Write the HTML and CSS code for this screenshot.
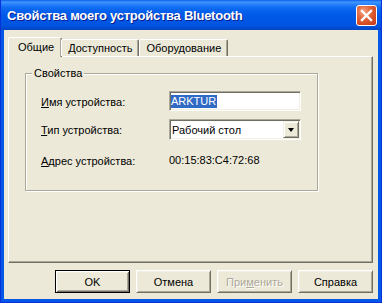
FILE: index.html
```html
<!DOCTYPE html>
<html lang="ru">
<head>
<meta charset="utf-8">
<title>Свойства моего устройства Bluetooth</title>
<link rel="stylesheet" href="styles.css">
</head>
<body>
<div class="window">
  <div class="titlebar">
    <span class="title">Свойства моего устройства Bluetooth</span>
    <button class="close" type="button" aria-label="Закрыть">
      <svg width="13" height="13" viewBox="0 0 13 13"><path d="M2 2 L11 11 M11 2 L2 11" stroke="#fff" stroke-width="2.4" stroke-linecap="square" fill="none"/></svg>
    </button>
  </div>
  <div class="client">
    <div class="tabs">
      <div class="tab active">Общие</div>
      <div class="tab">Доступность</div>
      <div class="tab">Оборудование</div>
    </div>
    <div class="panel">
      <div class="group">
        <span class="group-title">Свойства</span>
        <div class="form">
          <span class="label"><u>И</u>мя устройства:</span>
          <div class="edit"><span class="sel">ARKTUR</span></div>
          <span class="label"><u>Т</u>ип устройства:</span>
          <div class="combo">
            <span class="combo-text">Рабочий стол</span>
            <span class="combo-btn"><span class="arrow"></span></span>
          </div>
          <span class="label"><u>А</u>дрес устройства:</span>
          <span class="value">00:15:83:C4:72:68</span>
        </div>
      </div>
    </div>
    <div class="buttons">
      <button class="btn default" type="button">OK</button>
      <button class="btn" type="button">Отмена</button>
      <button class="btn disabled" type="button">При<u>м</u>енить</button>
      <button class="btn" type="button">Справка</button>
    </div>
  </div>
</div>
</body>
</html>
```

FILE: styles.css
```css
* { box-sizing: border-box; }

html, body {
  margin: 0;
  padding: 0;
  background: #ffffff;
}

body {
  font-family: "Liberation Sans", Arial, sans-serif;
  font-size: 11px;
  color: #000;
}

.window {
  width: 382px;
  height: 303px;
  display: flex;
  flex-direction: column;
  background: #0458E8;
  border-left: 1px solid #0831D9;
  border-right: 1px solid #0831D9;
  border-bottom: 1px solid #0831D9;
}

.titlebar {
  height: 30px;
  flex: 0 0 30px;
  display: flex;
  align-items: center;
  padding-left: 6px;
  padding-right: 4px;
  background: linear-gradient(to bottom,
    #0A5DE8 0px, #3F96FF 2px, #2C84FC 4px, #1270F4 7px, #0864EE 10px,
    #0059E8 15px, #0056E4 22px, #0053DD 26px, #0048C8 29px, #0046C3 30px);
}

.title {
  font-family: "Liberation Sans", Arial, sans-serif;
  font-weight: bold;
  font-size: 13px;
  color: #ffffff;
  text-shadow: 1px 1px 0 #0A1E8C;
  letter-spacing: -0.25px;
  margin-top: 1px;
}

.close {
  margin-left: auto;
  width: 21px;
  height: 21px;
  padding: 0;
  border: 1px solid #ffffff;
  border-radius: 3px;
  background: radial-gradient(circle at 35% 30%, #F4A88C 0%, #E4693F 35%, #D44A22 70%, #C23A17 100%);
  display: flex;
  align-items: center;
  justify-content: center;
  margin-top: 1px;
}

.close svg { display: block; }

.client {
  flex: 1;
  margin: 0 3px 3px 3px;
  background: #ECE9D8;
  padding: 7px 5px 0 4px;
  display: flex;
  flex-direction: column;
}

.tabs {
  display: flex;
  align-items: flex-end;
  height: 20px;
  margin-bottom: -1px;
  position: relative;
  z-index: 1;
}

.tab {
  height: 17px;
  margin-bottom: 1px;
  padding: 1px 6px 0 6px;
  line-height: 14px;
  background: #ECE9D8;
  border-top: 1px solid #ffffff;
  border-left: 1px solid #ffffff;
  border-right: 1px solid #716F64;
  box-shadow: inset -1px 0 0 #ACA899;
  border-radius: 2px 2px 0 0;
  white-space: nowrap;
}

.tab.active {
  height: 20px;
  margin-bottom: 0;
  padding: 2px 7px 0 9px;
  margin-right: -1px;
}

.panel {
  width: 365px;
  height: 207px;
  border-top: 1px solid #ffffff;
  border-left: 1px solid #ffffff;
  border-right: 1px solid #716F64;
  border-bottom: 1px solid #716F64;
  box-shadow: inset -1px -1px 0 #ACA899;
  padding: 16px 0 0 16px;
}

.group {
  position: relative;
  width: 293px;
  height: 118px;
  border: 1px solid #ACA899;
  box-shadow: inset 1px 1px 0 #ffffff, 1px 1px 0 #ffffff;
  padding: 17px 0 0 15px;
}

.group-title {
  position: absolute;
  top: -8px;
  left: 6px;
  padding: 0 2px;
  background: #ECE9D8;
  line-height: 14px;
}

.form {
  display: grid;
  grid-template-columns: 128px 132px;
  grid-template-rows: 20px 21px 24px;
  row-gap: 8px;
  align-items: center;
}

.label { line-height: 13px; padding-top: 2px; }

.value { line-height: 13px; padding-top: 1px; }

.edit {
  height: 20px;
  background: #ffffff;
  border: 1px solid;
  border-color: #ACA899 #ffffff #ffffff #ACA899;
  box-shadow: inset 1px 1px 0 #716F64, inset -1px -1px 0 #F1EFE2;
  display: flex;
  align-items: center;
  padding-left: 1px;
}

.sel {
  background: #316AC5;
  color: #ffffff;
  line-height: 13px;
  padding: 0 1px 0 0;
}

.combo {
  height: 21px;
  background: #ffffff;
  border: 1px solid;
  border-color: #ACA899 #ffffff #ffffff #ACA899;
  box-shadow: inset 1px 1px 0 #716F64, inset -1px -1px 0 #F1EFE2;
  display: flex;
  align-items: center;
  padding: 1px 1px 1px 2px;
}

.combo-text { flex: 1; line-height: 13px; padding-top: 1px; }

.combo-btn {
  width: 16px;
  height: 17px;
  background: #ECE9D8;
  border: 1px solid;
  border-color: #F1EFE2 #716F64 #716F64 #F1EFE2;
  box-shadow: inset 1px 1px 0 #ffffff, inset -1px -1px 0 #ACA899;
  display: flex;
  align-items: center;
  justify-content: center;
}

.arrow {
  width: 0;
  height: 0;
  border-left: 3.5px solid transparent;
  border-right: 3.5px solid transparent;
  border-top: 4px solid #000;
  margin-top: 1px;
}

.buttons {
  display: flex;
  justify-content: flex-end;
  gap: 6px;
  margin-top: 7px;
}

.btn {
  width: 75px;
  height: 23px;
  padding: 0;
  font-family: "Liberation Sans", Arial, sans-serif;
  font-size: 11px;
  color: #000;
  background: #ECE9D8;
  border: 1px solid;
  border-color: #ffffff #716F64 #716F64 #ffffff;
  box-shadow: inset 1px 1px 0 #F1EFE2, inset -1px -1px 0 #ACA899;
}

.btn.default {
  border: 1px solid #000000;
  box-shadow: inset 1px 1px 0 #ffffff, inset -1px -1px 0 #716F64, inset 2px 2px 0 #F1EFE2, inset -2px -2px 0 #ACA899;
}

.btn.disabled {
  color: #ACA899;
  text-shadow: 1px 1px 0 #ffffff;
}
```
